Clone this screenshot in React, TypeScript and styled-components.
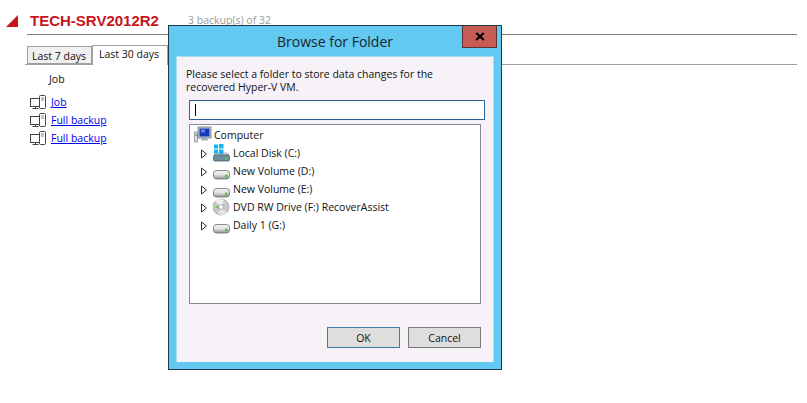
import React from 'react';
import styled, { createGlobalStyle } from 'styled-components';

const GlobalStyle = createGlobalStyle`
  html, body {
    margin: 0;
    padding: 0;
    background: #ffffff;
  }
  body {
    font-family: 'Open Sans', 'Noto Sans', sans-serif;
    font-size: 10.5px;
    color: #111;
  }
`;

const Page = styled.div`
  position: relative;
  width: 807px;
  height: 403px;
  overflow: hidden;
`;

const Header = styled.div`
  display: flex;
  align-items: flex-start;
  padding: 13px 10px 0 6px;
`;

const Triangle = styled.div`
  width: 0;
  height: 0;
  margin-top: 2px;
  border-style: solid;
  border-width: 0 0 12px 12px;
  border-color: transparent transparent #c8141c transparent;
`;

const HeaderMain = styled.div`
  flex: 1;
  margin-left: 9px;
  height: 21px;
  border-bottom: 1px solid #808080;
  display: flex;
  align-items: flex-start;
`;

const Title = styled.div`
  font-family: 'Liberation Sans', Arial, sans-serif;
  font-weight: 700;
  font-size: 15px;
  line-height: 16px;
  color: #c8141c;
  margin-left: 3px;
  width: 158px;
`;

const BackupCount = styled.div`
  line-height: 14px;
  color: #9a9a9a;
`;

const TabStrip = styled.div`
  display: flex;
  align-items: flex-end;
  height: 20px;
  margin: 9px 10px 0 25px;
  padding-left: 2px;
  border-bottom: 1px solid #a0a0a0;
`;

const Tab = styled.div<{ $active?: boolean }>`
  box-sizing: border-box;
  height: ${(p) => (p.$active ? 20 : 18)}px;
  width: ${(p) => (p.$active ? 76 : 65)}px;
  margin-bottom: ${(p) => (p.$active ? -1 : 0)}px;
  padding-left: ${(p) => (p.$active ? 6 : 4)}px;
  line-height: ${(p) => (p.$active ? 17 : 19)}px;
  border: 1px solid #a0a0a0;
  border-bottom: ${(p) => (p.$active ? '0' : '1px solid #a0a0a0')};
  background: ${(p) => (p.$active ? '#ffffff' : '#f0f0f0')};
  color: #111;
  white-space: nowrap;
`;

const JobHeading = styled.div`
  margin: 7px 0 0 49px;
  line-height: 15px;
`;

const JobList = styled.div`
  display: flex;
  flex-direction: column;
  gap: 2px;
  margin: 7px 0 0 30px;
`;

const JobRow = styled.div`
  display: flex;
  align-items: center;
  gap: 5px;
  height: 16px;
`;

const JobLink = styled.a`
  color: #0000ee;
  text-decoration: underline;
  line-height: 16px;
`;

const Dialog = styled.div`
  position: absolute;
  left: 168px;
  top: 25px;
  box-sizing: border-box;
  width: 334px;
  height: 345px;
  background: #63c9f0;
  border: 1px solid #1f3a4a;
  padding: 0 7px 7px;
  display: flex;
  flex-direction: column;
`;

const TitleBar = styled.div`
  position: relative;
  height: 30px;
  flex: none;
  display: flex;
  align-items: center;
  justify-content: center;
  font-size: 14px;
  color: #15262f;
`;

const CloseButton = styled.div`
  position: absolute;
  right: -3px;
  top: 0;
  box-sizing: border-box;
  width: 35px;
  height: 22px;
  background: #c75b55;
  border: 1px solid #5c3530;
  border-top: 0;
  display: flex;
  align-items: center;
  justify-content: center;
`;

const Client = styled.div`
  flex: 1;
  background: #f6f2f7;
  padding: 11px 9px 0;
  display: flex;
  flex-direction: column;
  border: 1px solid #a9dcf2;
  border-width: 1px 1px 0 1px;
`;

const Prompt = styled.div`
  line-height: 13px;
  height: 26px;
  white-space: nowrap;
`;

const FolderInput = styled.div`
  box-sizing: border-box;
  margin: 6px 0 0 3px;
  width: 296px;
  height: 20px;
  background: #fff;
  border: 1px solid #2a6496;
  padding: 3px 0 0 5px;
`;

const Caret = styled.div`
  width: 1px;
  height: 12px;
  background: #000;
`;

const TreeBox = styled.div`
  box-sizing: border-box;
  margin: 4px 0 0 3px;
  width: 292px;
  height: 180px;
  background: #fff;
  border: 1px solid #8a8a96;
  padding: 1px 0 0 4px;
`;

const TreeRow = styled.div<{ $root?: boolean }>`
  display: flex;
  align-items: center;
  height: 18px;
  padding-left: ${(p) => (p.$root ? 0 : 6)}px;
  white-space: nowrap;
`;

const Expander = styled.svg`
  width: 8px;
  height: 10px;
  flex: none;
  margin-right: 5px;
  margin-top: 2px;
`;

const IconSlot = styled.div`
  width: 20px;
  height: 18px;
  flex: none;
`;

const Footer = styled.div`
  display: flex;
  justify-content: flex-end;
  gap: 8px;
  margin: 23px 3px 0 0;
`;

const DialogButton = styled.div<{ $default?: boolean }>`
  box-sizing: border-box;
  width: 73px;
  height: 21px;
  background: #dedede;
  border: 1px solid ${(p) => (p.$default ? '#3d7bad' : '#7a7a7a')};
  display: flex;
  align-items: center;
  justify-content: center;
`;

const ComputerJobIcon = () => (
  <svg width="16" height="15" viewBox="0 0 16 15" fill="none">
    <rect x="0.500" y="3.500" width="10" height="8" fill="#fff" stroke="#444" />
    <path d="M5.500 11.500v2M2.500 13.500h6" stroke="#444" />
    <rect x="9.500" y="0.500" width="6" height="13" rx="1" fill="#fff" stroke="#444" />
    <path d="M11 3h3M11 5h3" stroke="#888" />
  </svg>
);

const ComputerIcon = () => (
  <svg width="20" height="18" viewBox="0 0 20 18">
    <rect x="0.500" y="6" width="3" height="10" fill="#dcdcdc" stroke="#777" strokeWidth="0.6" />
    <rect x="1.200" y="8" width="1.600" height="2" fill="#5fc13c" />
    <rect x="4" y="1" width="13" height="11" fill="#c4ccd6" stroke="#6a7280" strokeWidth="0.8" />
    <rect x="5.500" y="2.500" width="10" height="8" fill="#1638b8" />
    <rect x="7" y="3.500" width="4" height="3" fill="#5a86e8" />
    <path d="M8 12h5l1 2.500H7z" fill="#a4aab2" />
  </svg>
);

const DiskIcon = () => (
  <svg width="20" height="18" viewBox="0 0 20 18">
    <defs>
      <linearGradient id="diskFill" x1="0" y1="0" x2="0" y2="1">
        <stop offset="0" stopColor="#f4f4f4" />
        <stop offset="0.500" stopColor="#e2e2e2" />
        <stop offset="1" stopColor="#8e9296" />
      </linearGradient>
    </defs>
    <rect x="0.500" y="8.500" width="16" height="8.500" rx="3" fill="url(#diskFill)" stroke="#6a6e72" strokeWidth="0.800" />
    <rect x="12" y="12.500" width="2.500" height="3" fill="#58c43a" />
  </svg>
);

const SystemDiskIcon = () => (
  <svg width="20" height="18" viewBox="0 0 20 18">
    <path d="M1 11 L3 9 H14 L16 11z" fill="#dfe6ea" stroke="#8a9298" strokeWidth="0.600" />
    <rect x="0.500" y="11" width="16" height="6" rx="1.500" fill="#6f8ea0" stroke="#4a5a66" strokeWidth="0.800" />
    <rect x="12" y="13" width="2.500" height="2.500" fill="#58c43a" />
    <path d="M1 0.500h4v4H1zM6 0h4.500v4.500H6zM1 5.500h4v4H1zM6 5.500h4.500V10H6z" fill="#12b5f2" />
  </svg>
);

const DvdIcon = () => (
  <svg width="20" height="18" viewBox="0 0 20 18">
    <circle cx="8" cy="9" r="8" fill="#c9c9c9" stroke="#9a9a9a" strokeWidth="0.700" />
    <path d="M8 9 L2 3 A8 8 0 0 1 11 2z" fill="#eeeeee" />
    <path d="M8 9 L14 15 A8 8 0 0 1 5 16z" fill="#e4e4e4" />
    <circle cx="8" cy="9" r="2.400" fill="#fff" stroke="#888" strokeWidth="0.700" />
    <rect x="2.500" y="8" width="3" height="2" fill="#6cc848" />
  </svg>
);

const CloseGlyph = () => (
  <svg width="10" height="9" viewBox="0 0 10 9">
    <path d="M1.200 1 L8.800 8 M8.800 1 L1.200 8" stroke="#000" strokeWidth="2.200" />
  </svg>
);

const drives = [
  { label: 'Local Disk (C:)', icon: <SystemDiskIcon /> },
  { label: 'New Volume (D:)', icon: <DiskIcon /> },
  { label: 'New Volume (E:)', icon: <DiskIcon /> },
  { label: 'DVD RW Drive (F:) RecoverAssist', icon: <DvdIcon /> },
  { label: 'Daily 1 (G:)', icon: <DiskIcon /> },
];

const App: React.FC = () => (
  <Page>
    <GlobalStyle />
    <Header>
      <Triangle />
      <HeaderMain>
        <Title>TECH-SRV2012R2</Title>
        <BackupCount>3 backup(s) of 32</BackupCount>
      </HeaderMain>
    </Header>
    <TabStrip>
      <Tab>Last 7 days</Tab>
      <Tab $active>Last 30 days</Tab>
    </TabStrip>
    <JobHeading>Job</JobHeading>
    <JobList>
      {['Job', 'Full backup', 'Full backup'].map((name, i) => (
        <JobRow key={i}>
          <ComputerJobIcon />
          <JobLink href="#">{name}</JobLink>
        </JobRow>
      ))}
    </JobList>

    <Dialog>
      <TitleBar>
        Browse for Folder
        <CloseButton>
          <CloseGlyph />
        </CloseButton>
      </TitleBar>
      <Client>
        <Prompt>
          Please select a folder to store data changes for the
          <br />
          recovered Hyper-V VM.
        </Prompt>
        <FolderInput>
          <Caret />
        </FolderInput>
        <TreeBox>
          <TreeRow $root>
            <IconSlot>
              <ComputerIcon />
            </IconSlot>
            <span>Computer</span>
          </TreeRow>
          {drives.map((d) => (
            <TreeRow key={d.label}>
              <Expander viewBox="0 0 8 10">
                <path d="M1.500 1 L6.500 5 L1.500 9z" fill="#fff" stroke="#333" />
              </Expander>
              <IconSlot>{d.icon}</IconSlot>
              <span>{d.label}</span>
            </TreeRow>
          ))}
        </TreeBox>
        <Footer>
          <DialogButton $default>OK</DialogButton>
          <DialogButton>Cancel</DialogButton>
        </Footer>
      </Client>
    </Dialog>
  </Page>
);

export default App;
